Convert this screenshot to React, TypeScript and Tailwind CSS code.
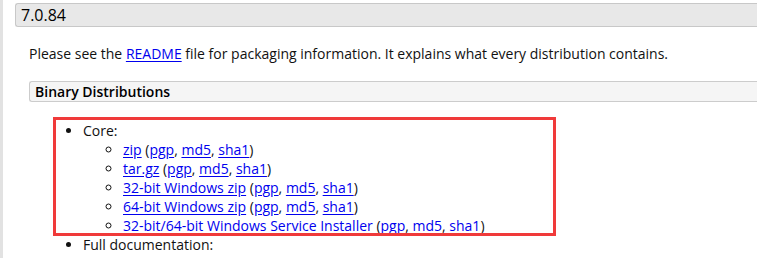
import React from 'react'

const files = [
  { name: 'zip' },
  { name: 'tar.gz' },
  { name: '32-bit Windows zip' },
  { name: '64-bit Windows zip' },
  { name: '32-bit/64-bit Windows Service Installer' },
]

function A({ children }: { children: React.ReactNode }) {
  return (
    <a href="#" className="text-[#0000ee] underline underline-offset-2">
      {children}
    </a>
  )
}

export default function App() {
  return (
    <div
      className="min-h-[258px] w-[757px] overflow-hidden bg-white text-[14px] leading-[19px] text-[#111]"
      style={{ fontFamily: '"Open Sans", sans-serif' }}
    >
      <div className="min-h-[258px] border-l-[3px] border-[#e2e2e2] pl-3 pt-[3px]">
        {/* Version header */}
        <h2 className="rounded-l-[3px] border border-r-0 border-[#c8c8c8] bg-[#e8e8e8] pl-[5px] text-[16px] leading-[22px] font-normal text-black">
          7.0.84
        </h2>

        <div className="pl-[14px]">
          <p className="mt-[17px]">
            Please see the <A>README</A> file for packaging information. It explains what every distribution contains.
          </p>

          <h3 className="mt-[18px] rounded-l-[3px] border border-r-0 border-[#cccccc] bg-[#f5f5f5] pl-[5px] leading-[19px] font-semibold text-black">
            Binary Distributions
          </h3>

          <div className="relative mt-[19px]">
            <ul className="list-disc pl-[54px]">
              <li>
                Core:
                <ul className="list-[circle] pl-[40px]">
                  {files.map((f) => (
                    <li key={f.name}>
                      <A>{f.name}</A> (<A>pgp</A>, <A>md5</A>, <A>sha1</A>)
                    </li>
                  ))}
                </ul>
              </li>
              <li>Full documentation:</li>
            </ul>
            {/* annotation box */}
            <div className="pointer-events-none absolute top-[-4px] left-[24px] h-[119px] w-[503px] border-[3px] border-[#f03a3a]" />
          </div>
        </div>
      </div>
    </div>
  )
}
